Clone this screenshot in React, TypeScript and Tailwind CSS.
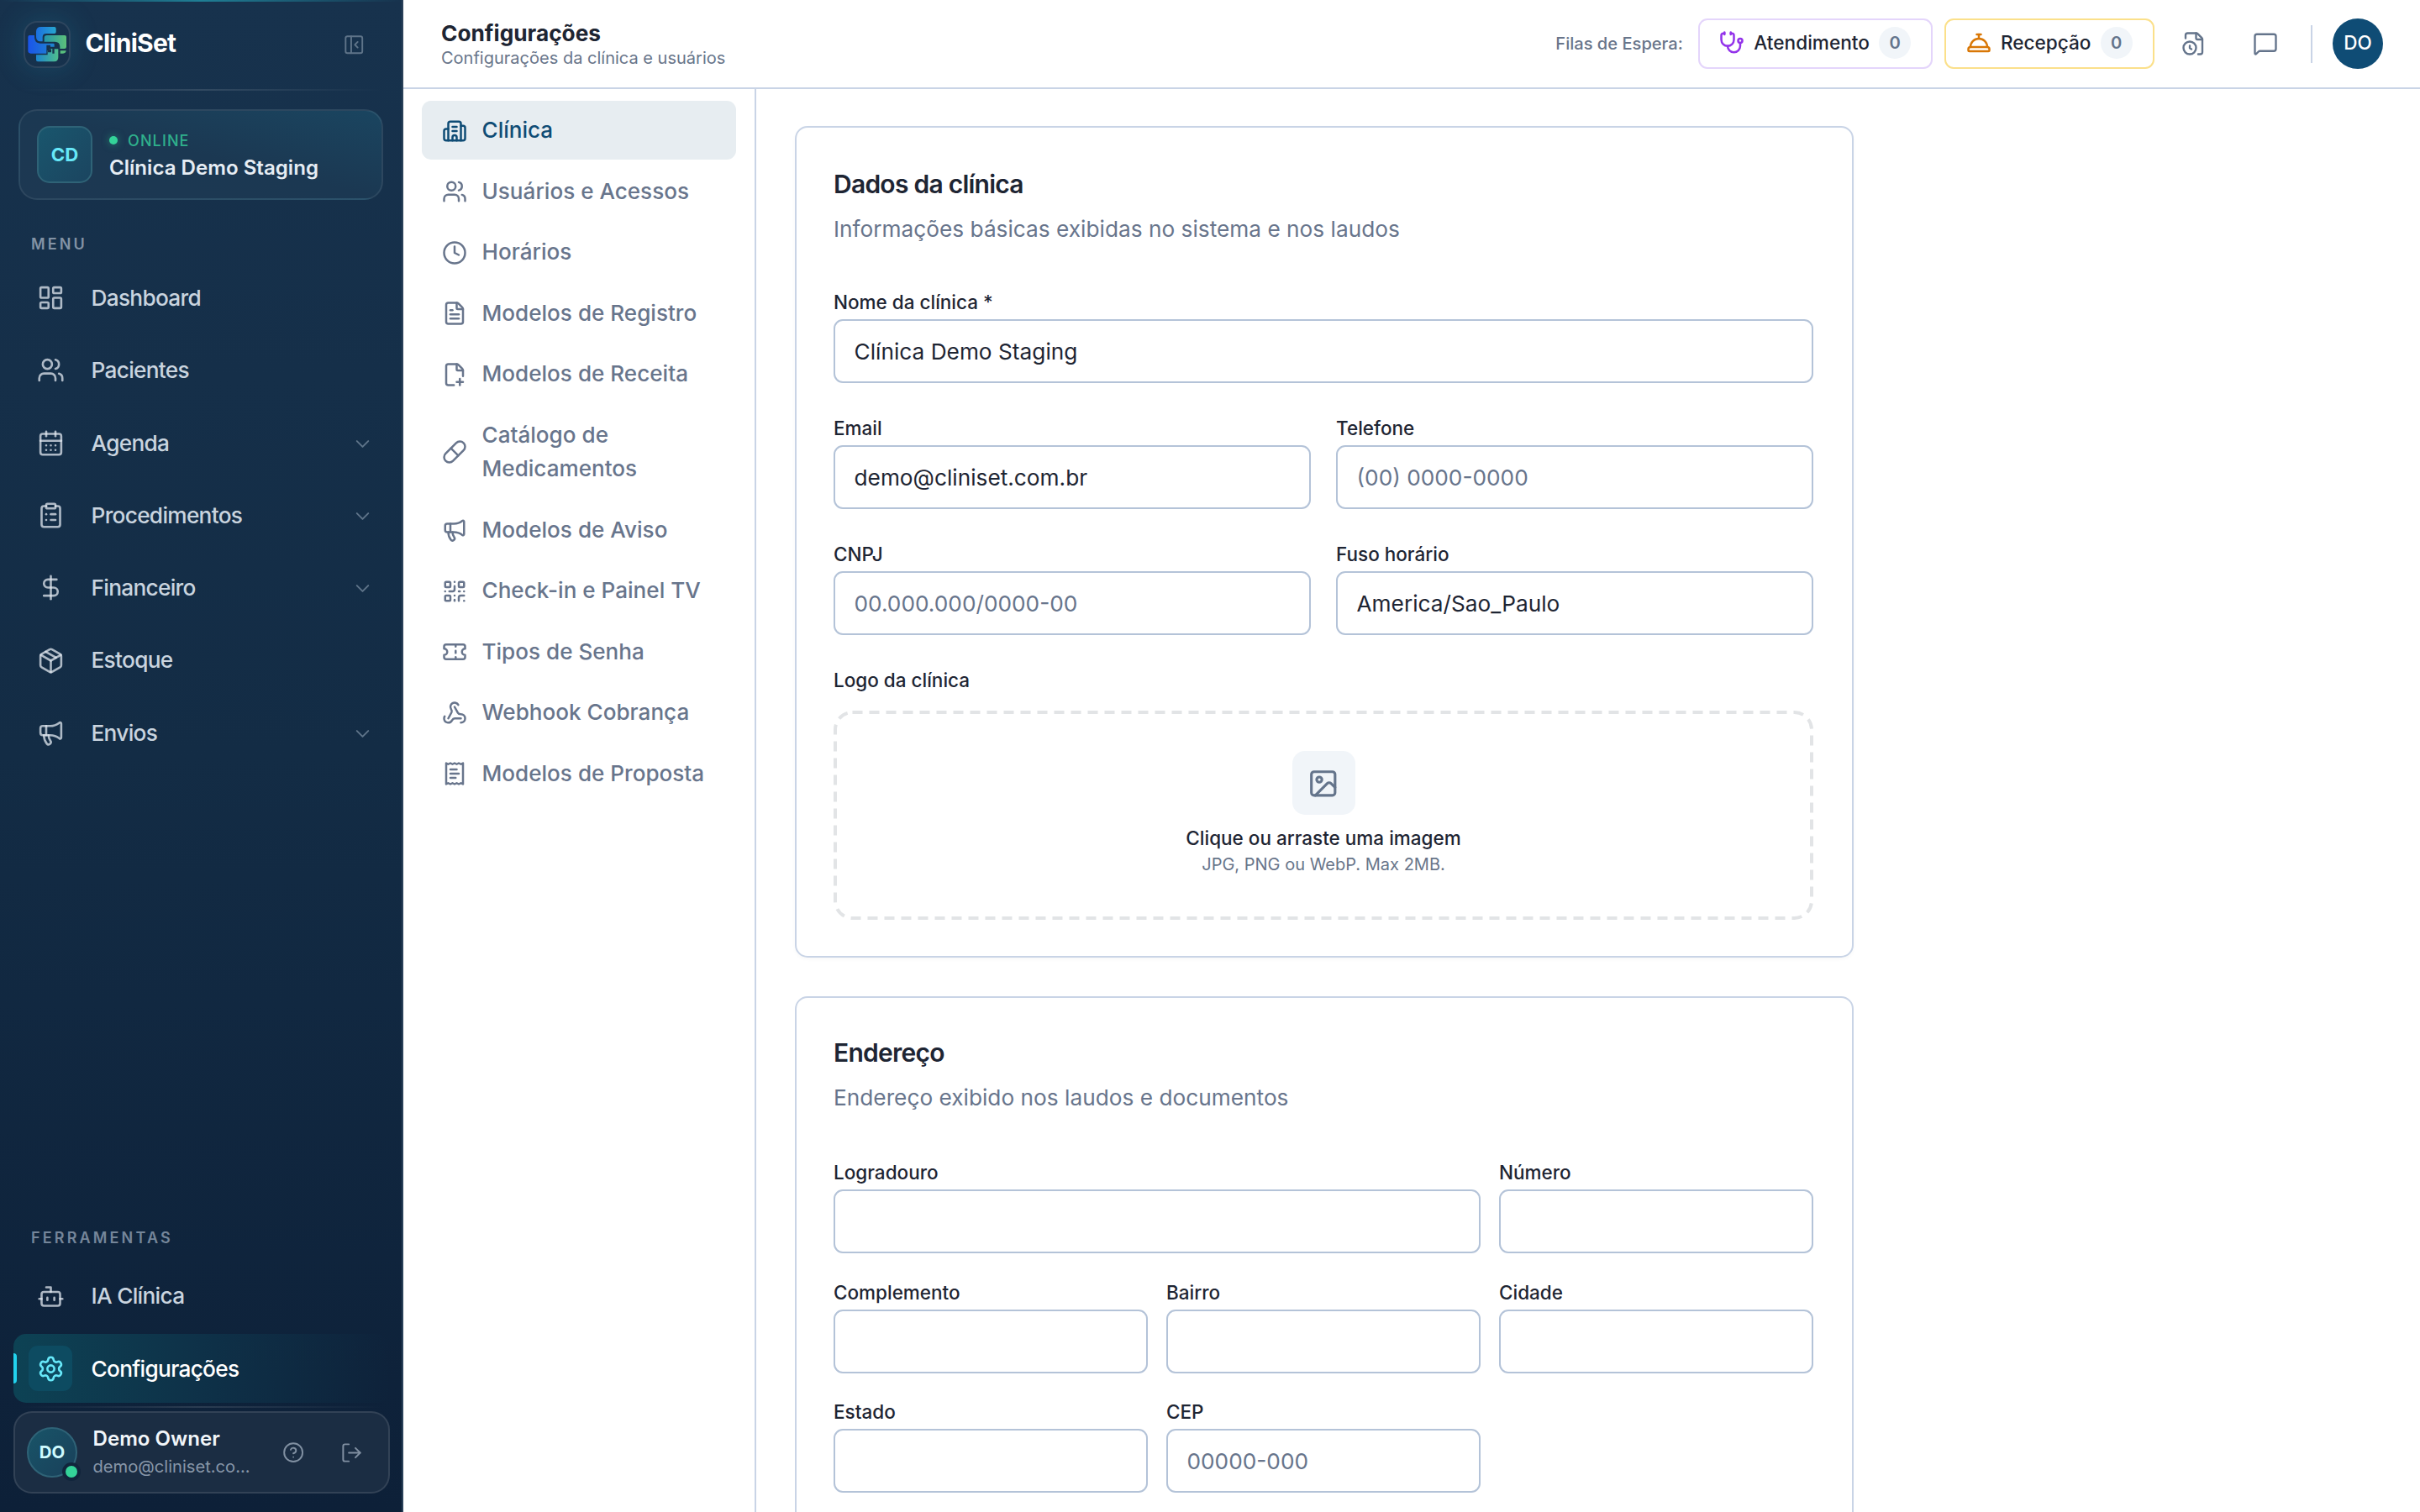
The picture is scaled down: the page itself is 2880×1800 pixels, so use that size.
import React from "react";
import {
  LayoutDashboard,
  Users,
  ClipboardList,
  DollarSign,
  Package,
  Megaphone,
  ChevronDown,
  Bot,
  Settings,
  CircleHelp,
  LogOut,
  PanelLeftClose,
  Clock,
  FileText,
  Pill,
  QrCode,
  Ticket,
  Webhook,
  Stethoscope,
  ConciergeBell,
  FileClock,
  MessageSquare,
  Image as ImageIcon,
} from "lucide-react";

type IconProps = { size?: number; strokeWidth?: number; className?: string };
type IconType = React.ComponentType<IconProps>;

const svgProps = (size: number, strokeWidth: number, className?: string) => ({
  width: size,
  height: size,
  viewBox: "0 0 24 24",
  fill: "none",
  stroke: "currentColor",
  strokeWidth,
  strokeLinecap: "round" as const,
  strokeLinejoin: "round" as const,
  className,
});

function CalendarIcon({ size = 24, strokeWidth = 2, className }: IconProps) {
  return (
    <svg {...svgProps(size, strokeWidth, className)}>
      <path d="M8 2v4" />
      <path d="M16 2v4" />
      <rect x="3" y="4" width="18" height="18" rx="2" />
      <path d="M3 10h18" />
      <path d="M8 14h.01M12 14h.01M16 14h.01M8 18h.01M12 18h.01M16 18h.01" />
    </svg>
  );
}

function BuildingIcon({ size = 24, strokeWidth = 2, className }: IconProps) {
  return (
    <svg {...svgProps(size, strokeWidth, className)}>
      <path d="M10 12h4" />
      <path d="M10 8h4" />
      <path d="M14 21v-3a2 2 0 0 0-4 0v3" />
      <path d="M6 10H4a2 2 0 0 0-2 2v7a2 2 0 0 0 2 2h16a2 2 0 0 0 2-2V9a2 2 0 0 0-2-2h-2" />
      <path d="M6 21V5a2 2 0 0 1 2-2h8a2 2 0 0 1 2 2v16" />
    </svg>
  );
}

function FilePlusIcon({ size = 24, strokeWidth = 2, className }: IconProps) {
  return (
    <svg {...svgProps(size, strokeWidth, className)}>
      <path d="M11.35 22H6a2 2 0 0 1-2-2V4a2 2 0 0 1 2-2h8a2.4 2.4 0 0 1 1.706.706l3.588 3.588A2.4 2.4 0 0 1 20 8v5.35" />
      <path d="M14 2v5a1 1 0 0 0 1 1h5" />
      <path d="M14 19h6" />
      <path d="M17 16v6" />
    </svg>
  );
}

function ReceiptIcon({ size = 24, strokeWidth = 2, className }: IconProps) {
  return (
    <svg {...svgProps(size, strokeWidth, className)}>
      <path d="M4 2v20l2-1 2 1 2-1 2 1 2-1 2 1 2-1 2 1V2l-2 1-2-1-2 1-2-1-2 1-2-1-2 1Z" />
      <path d="M14 8H8" />
      <path d="M16 12H8" />
      <path d="M13 16H8" />
    </svg>
  );
}

function Logo() {
  return (
    <svg width="56" height="56" viewBox="12 12 168 168">
      <defs>
        <linearGradient id="lgTop" x1="0" x2="1" y1="0" y2="0">
          <stop offset="0" stopColor="#1b6fe0" />
          <stop offset="1" stopColor="#27a6cf" />
        </linearGradient>
        <linearGradient id="lgLeft" x1="0" x2="1" y1="0" y2="0">
          <stop offset="0" stopColor="#1a54ea" />
          <stop offset="1" stopColor="#1f86cf" />
        </linearGradient>
        <linearGradient id="lgRight" x1="0" x2="1" y1="0" y2="0">
          <stop offset="0" stopColor="#2497ad" />
          <stop offset="1" stopColor="#5cc079" />
        </linearGradient>
        <linearGradient id="lgBottom" x1="0" x2="1" y1="0" y2="0">
          <stop offset="0" stopColor="#1c86d0" />
          <stop offset="1" stopColor="#4fbd8c" />
        </linearGradient>
      </defs>
      <path d="M122 33H74Q57 33 57 50V68Q57 84 72 85H80V70Q80 57 93 57H122Q128 57 128 51V39Q128 33 122 33Z" fill="url(#lgTop)" />
      <path d="M34 63H51V70Q51 92 72 92H118Q122 92 122 96V104H108V98H94V128H38Q28 128 28 118V69Q28 63 34 63Z" fill="url(#lgLeft)" />
      <path d="M96 63H159Q165 63 165 69V104Q165 111 158 111H142V104Q142 86 124 86H86V73Q86 63 96 63Z" fill="url(#lgRight)" />
      <path d="M57 133H98V117H104V111H115V128H122V112H136V142Q136 157 121 157H63Q57 157 57 151Z" fill="url(#lgBottom)" />
      <path d="M143 118H164Q163 128 153 128H143Z" fill="#58bf7d" />
      <rect x="99" y="112" width="12" height="12" rx="2" fill="#17324d" />
    </svg>
  );
}

function NavItem({
  icon: Icon,
  label,
  chevron,
  active,
}: {
  icon: IconType;
  label: string;
  chevron?: boolean;
  active?: boolean;
}) {
  return (
    <div
      className={
        active
          ? "relative flex h-[82.4px] items-center overflow-hidden rounded-[15px] bg-linear-to-r from-[#0d4254] via-[#0e3148] to-transparent pr-[19px] pl-[18px]"
          : "relative flex h-[82.4px] items-center rounded-[15px] pr-[19px] pl-[18px]"
      }
    >
      {active && <span className="absolute top-[23px] left-0 h-[36px] w-1 rounded-r-full bg-[#22d3ee]" />}
      <span
        className={
          active
            ? "flex h-[54px] w-[52px] items-center justify-center rounded-[11px] bg-[#0d4b61] text-[#67e8f9]"
            : "flex h-[54px] w-[52px] items-center justify-center text-[#e2e8f0]/75"
        }
      >
        <Icon size={33} strokeWidth={1.9} />
      </span>
      <span
        className={
          active
            ? "ml-[22.5px] flex-1 text-[26.25px] font-medium tracking-[-0.027em] text-white"
            : "ml-[22.5px] flex-1 text-[26.25px] font-medium tracking-[-0.027em] text-[#c9d4df]"
        }
      >
        {label}
      </span>
      {chevron && <ChevronDown size={27} strokeWidth={1.75} className="mt-[2px] text-[#5f7489]" />}
    </div>
  );
}

function Sidebar() {
  return (
    <aside className="relative flex h-full w-[480px] shrink-0 flex-col border-r-2 border-[#2a4159] bg-linear-to-b from-[#17324d] via-[#132c45] to-[#0d2038]">
      <div className="absolute inset-x-0 top-0 h-[2px] bg-linear-to-r from-transparent via-[#1f7f95] to-transparent" />
      <div className="flex h-[106px] shrink-0 items-center pr-[44px] pl-[28px]">
        <div className="flex size-[56px] items-center justify-center rounded-[16px] shadow-[0_0_34px_rgba(34,160,190,0.22),inset_0_0_0_2px_rgba(255,255,255,0.1)]">
          <Logo />
        </div>
        <span className="mb-[3px] ml-[17.5px] flex-1 text-[30px] font-bold tracking-tight text-white">CliniSet</span>
        <PanelLeftClose size={26.5} strokeWidth={1.75} className="text-[#5f7489]" />
      </div>
      <div className="mx-[22px] h-[2px] shrink-0 bg-linear-to-r from-transparent via-white/12 to-transparent" />

      <div className="mt-[22px] ml-[22px] flex h-[108px] w-[434px] shrink-0 items-center rounded-[22px] border-2 border-white/8 bg-linear-to-tr from-[#1d3852] via-[#1b3852] to-[#1a4560] pl-[20px]">
        <div className="flex h-[68px] w-[66px] items-center justify-center rounded-[15px] border-2 border-[#2f6377] bg-linear-to-br from-[#19566d] to-[#1b4560] text-[22.2px] font-bold text-[#67e8f9]">
          CD
        </div>
        <div className="ml-[20px] flex flex-col pt-[4px]">
          <div className="flex h-[26px] items-center">
            <span className="size-[10px] rounded-full bg-[#34d399] shadow-[0_0_10px_rgba(52,211,153,0.5)]" />
            <span className="ml-[12px] text-[18px] font-medium tracking-[1.1px] text-[#2fb08c]">ONLINE</span>
          </div>
          <span className="mt-[2px] text-[24.1px] leading-[36px] font-semibold text-[#e6edf4]">Clínica Demo Staging</span>
        </div>
      </div>

      <div className="mt-[38.5px] pl-[37px] text-[18px] leading-[28px] font-semibold tracking-[0.175em] text-[#8393a5]">MENU</div>
      <nav className="mt-[9px] flex flex-col gap-[3.9px] pr-[14px] pl-[16px]">
        <NavItem icon={LayoutDashboard} label="Dashboard" />
        <NavItem icon={Users} label="Pacientes" />
        <NavItem icon={CalendarIcon} label="Agenda" chevron />
        <NavItem icon={ClipboardList} label="Procedimentos" chevron />
        <NavItem icon={DollarSign} label="Financeiro" chevron />
        <NavItem icon={Package} label="Estoque" />
        <NavItem icon={Megaphone} label="Envios" chevron />
      </nav>

      <div className="mt-auto pl-[37px] text-[18px] leading-[28px] font-semibold tracking-[0.175em] text-[#75869a]">FERRAMENTAS</div>
      <nav className="mt-[14.3px] flex flex-col gap-[3.75px] pr-[14px] pl-[16px]">
        <NavItem icon={Bot} label="IA Clínica" />
        <NavItem icon={Settings} label="Configurações" active />
      </nav>
      <div className="mx-[22px] mt-[3.6px] h-[2px] shrink-0 bg-linear-to-r from-transparent via-white/12 to-transparent" />
      <div className="mt-[4px] mb-[22px] ml-[16px] flex h-[98px] w-[448px] shrink-0 items-center rounded-[22px] border-2 border-white/10 bg-[#1b2d43] pl-[14px]">
        <div className="relative flex size-[60px] items-center justify-center rounded-full border-2 border-[#2f6377] bg-linear-to-br from-[#185468] to-[#19405a] text-[20.4px] font-bold text-[#cffafe]">
          DO
          <span className="absolute right-[-6px] bottom-[-6px] size-[22px] rounded-full border-4 border-[#11253c] bg-[#34d399]" />
        </div>
        <div className="ml-[18.5px] flex w-[225.5px] flex-col">
          <span className="text-[24.1px] leading-[34px] font-semibold text-[#f1f5f9]">Demo Owner</span>
          <span className="mt-[-1px] text-[20.15px] leading-[34px] text-[#8796a8]">demo@cliniset.co...</span>
        </div>
        <CircleHelp size={26.25} strokeWidth={1.75} className="text-[#8190a2]" />
        <LogOut size={27} strokeWidth={1.75} className="ml-[43px] text-[#8190a2]" />
      </div>
    </aside>
  );
}

function QueueButton({
  icon: Icon,
  label,
  tone,
}: {
  icon: IconType;
  label: string;
  tone: "purple" | "amber";
}) {
  return (
    <div
      className={
        tone === "purple"
          ? "flex h-[60px] items-center gap-[11px] rounded-[11px] border-2 border-[#e4d5fb] pr-[24px] pl-[23.5px]"
          : "flex h-[60px] items-center gap-[11px] rounded-[11px] border-2 border-[#fbe08a] pr-[24px] pl-[23.5px]"
      }
    >
      <Icon size={30} strokeWidth={2} className={tone === "purple" ? "mt-[-2px] text-[#9333ea]" : "mt-[-2px] text-[#d97706]"} />
      <span className="mt-[-2px] text-[22.6px] font-medium text-[#1e2533]">{label}</span>
      <span className="mt-[-2px] flex h-[38px] w-[38.5px] items-center justify-center rounded-full bg-[#f1f5f9] text-[20.2px] font-semibold text-[#64748b]">
        0
      </span>
    </div>
  );
}

function Header() {
  return (
    <header className="flex h-[106px] shrink-0 items-center border-b-2 border-[#c9d4e6] pr-[44px] pl-[45px]">
      <div className="flex flex-1 flex-col pt-[3px]">
        <span className="text-[26.25px] leading-[32px] font-bold text-[#1e2533]">Configurações</span>
        <span className="mt-[-1px] text-[20.03px] leading-[28px] text-[#68758a]">Configurações da clínica e usuários</span>
      </div>
      <span className="mr-[18px] text-[20.1px] font-medium text-[#68758a]">Filas de Espera:</span>
      <QueueButton icon={Stethoscope} label="Atendimento" tone="purple" />
      <div className="w-[14px]" />
      <QueueButton icon={ConciergeBell} label="Recepção" tone="amber" />
      <FileClock size={30} strokeWidth={1.9} className="ml-[32px] text-[#64748b]" />
      <MessageSquare size={30} strokeWidth={1.9} className="ml-[55px] text-[#64748b]" />
      <div className="ml-[39px] h-[45px] w-[2px] bg-[#c9d4e6]" />
      <div className="ml-[24px] flex size-[60px] items-center justify-center rounded-full bg-[#0f4c75] pb-[2px] text-[22.5px] font-medium text-white">
        DO
      </div>
    </header>
  );
}

const sections: { icon: IconType; label: string }[] = [
  { icon: BuildingIcon, label: "Clínica" },
  { icon: Users, label: "Usuários e Acessos" },
  { icon: Clock, label: "Horários" },
  { icon: FileText, label: "Modelos de Registro" },
  { icon: FilePlusIcon, label: "Modelos de Receita" },
  { icon: Pill, label: "Catálogo de Medicamentos" },
  { icon: Megaphone, label: "Modelos de Aviso" },
  { icon: QrCode, label: "Check-in e Painel TV" },
  { icon: Ticket, label: "Tipos de Senha" },
  { icon: Webhook, label: "Webhook Cobrança" },
  { icon: ReceiptIcon, label: "Modelos de Proposta" },
];

function SectionNav() {
  return (
    <nav className="flex w-[420px] shrink-0 flex-col gap-[2.6px] border-r-2 border-[#c9d4e6] pt-[14px] pr-[22px] pl-[22px]">
      {sections.map(({ icon: Icon, label }, i) => (
        <div
          key={label}
          className={
            i === 0
              ? "flex items-center gap-[17.5px] rounded-[11px] bg-[#e7edf1] px-[24px] py-[15px] text-[#0f4c75]"
              : "flex items-center gap-[17.5px] rounded-[11px] px-[24px] py-[15px] text-[#68758c]"
          }
        >
          <Icon size={30} strokeWidth={2} className="mt-[1px] shrink-0" />
          <span className="text-[26.1px] leading-[40px] font-medium">{label}</span>
        </div>
      ))}
    </nav>
  );
}

function Field({
  label,
  value,
  placeholder,
  className = "",
}: {
  label: string;
  value?: string;
  placeholder?: string;
  className?: string;
}) {
  return (
    <label className={`flex flex-col ${className}`}>
      <span className="text-[22.5px] leading-[30px] font-medium text-[#1e2533]">{label}</span>
      <input
        readOnly
        value={value ?? ""}
        placeholder={placeholder}
        className="mt-[5px] h-[76px] w-full rounded-[11px] border-2 border-[#b4c3d8] bg-white px-[22.5px] text-[26.25px] text-[#1e2533] outline-none placeholder:text-[#68758c]"
      />
    </label>
  );
}

function CardHeading({ title, subtitle }: { title: string; subtitle: string }) {
  return (
    <div className="flex flex-col">
      <h2 className="text-[30px] leading-[44px] font-semibold tracking-[-0.025em] text-[#1e2533]">{title}</h2>
      <p className="mt-[11px] text-[26.25px] leading-[42px] text-[#68758c]">{subtitle}</p>
    </div>
  );
}

function UploadBox() {
  return (
    <div className="relative mt-[21px] flex h-[249px] flex-col items-center pt-[48px]">
      <svg className="absolute inset-0 size-full" fill="none">
        <rect
          x="2"
          y="2"
          width="1162"
          height="245"
          rx="20.5"
          stroke="#e2e4e6"
          strokeWidth="4"
          strokeDasharray="12 8"
        />
      </svg>
      <div className="flex h-[76px] w-[75px] items-center justify-center rounded-[15px] bg-[#f1f5f9] pt-[1px]">
        <ImageIcon size={37.5} strokeWidth={2} className="text-[#64748b]" />
      </div>
      <span className="mt-[11px] text-[22.5px] leading-[34px] font-medium text-[#1e2533]">Clique ou arraste uma imagem</span>
      <span className="text-[20.03px] leading-[28px] text-[#68758a]">JPG, PNG ou WebP. Max 2MB.</span>
    </div>
  );
}

export default function App() {
  return (
    <div className="flex h-[1800px] w-[2880px] overflow-hidden bg-white font-['Inter',sans-serif]">
      <Sidebar />
      <div className="flex min-w-0 flex-1 flex-col">
        <Header />
        <div className="flex min-h-0 flex-1">
          <SectionNav />
          <main className="min-w-0 flex-1 overflow-hidden pt-[44px] pl-[46px]">
            <section className="h-[990px] w-[1260px] rounded-[15px] border-2 border-[#c9d4e6] pt-[45px] pr-[46px] pl-[44px] shadow-[0_2px_4px_rgba(15,23,42,0.03)]">
              <CardHeading title="Dados da clínica" subtitle="Informações básicas exibidas no sistema e nos laudos" />
              <div className="mt-[51px] grid grid-cols-2 gap-x-[30px] gap-y-[39px]">
                <Field label="Nome da clínica *" value="Clínica Demo Staging" className="col-span-2" />
                <Field label="Email" value="demo@cliniset.com.br" />
                <Field label="Telefone" placeholder="(00) 0000-0000" />
                <Field label="CNPJ" placeholder="00.000.000/0000-00" />
                <Field label="Fuso horário" value="America/Sao_Paulo" />
              </div>
              <div className="mt-[39px] text-[22.5px] leading-[30px] font-medium text-[#1e2533]">Logo da clínica</div>
              <UploadBox />
            </section>

            <section className="mt-[46px] h-[990px] w-[1260px] rounded-[15px] border-2 border-[#c9d4e6] pt-[43px] pr-[46px] pl-[44px]">
              <CardHeading title="Endereço" subtitle="Endereço exibido nos laudos e documentos" />
              <div className="mt-[53px] grid grid-cols-3 gap-x-[22px] gap-y-[31.5px]">
                <Field label="Logradouro" className="col-span-2" />
                <Field label="Número" />
                <Field label="Complemento" />
                <Field label="Bairro" />
                <Field label="Cidade" />
                <Field label="Estado" />
                <Field label="CEP" placeholder="00000-000" />
              </div>
            </section>
          </main>
        </div>
      </div>
    </div>
  );
}
